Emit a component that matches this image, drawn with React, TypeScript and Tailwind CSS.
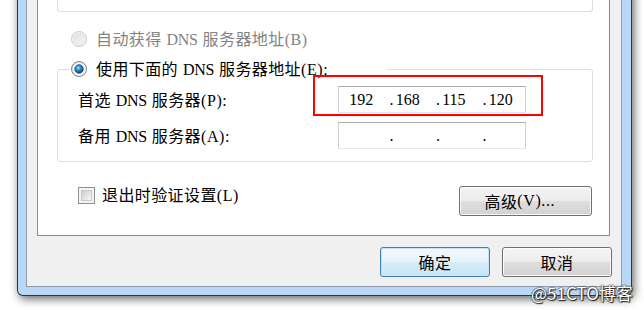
import React from "react";

function T({ s }: { s: string }) {
  const runs = s.match(/[\x00-\x7f]+|[^\x00-\x7f]+/g) || [];
  return (
    <>
      {runs.map((r, i) =>
        r.charCodeAt(0) < 128 ? (
          r.startsWith(" ") ? (
            <span
              key={i}
              className="inline-block whitespace-pre text-center font-['Liberation_Serif'] text-[16px] tracking-[-0.3px]"
              style={{ width: `${r.length * 8.2}px` }}
            >
              {r}
            </span>
          ) : (
            <span
              key={i}
              className="inline-block whitespace-pre text-left font-['Liberation_Serif'] text-[16px] tracking-[0.6px]"
              style={{ width: `${r.length * 8.2}px` }}
            >
              {r}
            </span>
          )
        ) : (
          <span key={i} className="tracking-[0.4px]">
            {r}
          </span>
        )
      )}
    </>
  );
}

function RadioOff() {
  return (
    <svg width="16" height="16" viewBox="0 0 16 16" className="shrink-0">
      <defs>
        <linearGradient id="rdoff" x1="0" y1="0" x2="1" y2="1">
          <stop offset="0" stopColor="#dedede" />
          <stop offset="1" stopColor="#f7f7f7" />
        </linearGradient>
      </defs>
      <circle cx="8" cy="8" r="7.5" fill="#f4f4f4" stroke="#c9c9c9" />
      <circle cx="8" cy="8" r="5.6" fill="url(#rdoff)" stroke="#e2e2e2" strokeWidth="0.6" />
    </svg>
  );
}

function RadioOn() {
  return (
    <svg width="16" height="16" viewBox="0 0 16 16" className="shrink-0">
      <defs>
        <radialGradient id="rdon" cx="0.42" cy="0.38" r="0.65">
          <stop offset="0" stopColor="#a6e4ff" />
          <stop offset="0.4" stopColor="#2f8fd0" />
          <stop offset="1" stopColor="#0b355f" />
        </radialGradient>
        <linearGradient id="rdring" x1="0" y1="0" x2="1" y2="1">
          <stop offset="0" stopColor="#d8d8d8" />
          <stop offset="1" stopColor="#ffffff" />
        </linearGradient>
      </defs>
      <circle cx="8" cy="8" r="7.5" fill="url(#rdring)" stroke="#7e8385" />
      <circle cx="8" cy="8" r="6" fill="#fbfbfb" />
      <circle cx="8" cy="8" r="4.4" fill="url(#rdon)" stroke="#1b4a78" strokeWidth="0.5" />
    </svg>
  );
}

function IpBox({ vals }: { vals: string[] }) {
  return (
    <div className="flex h-[27px] w-[188px] items-center border border-[#ccd0d6] border-t-[#abadb3] border-b-[#e3e9ef] bg-white pl-[2px]">
      {vals.map((v, i) => (
        <div key={i} className="flex w-[46.5px] shrink-0 items-center">
          <span className="inline-block w-[8.2px] text-center font-['Liberation_Serif'] text-[16px]">
            {i === 0 ? "\u00a0" : "."}
          </span>
          <span className="font-['Liberation_Serif'] text-[16px] whitespace-pre">{v}</span>
        </div>
      ))}
    </div>
  );
}

const btnNormal =
  "flex h-[30px] items-center justify-center rounded-[3px] border border-[#707070] bg-[linear-gradient(to_bottom,#f4f4f4_0%,#ececec_48%,#dedede_52%,#d2d2d2_100%)] shadow-[inset_0_0_0_1px_rgba(255,255,255,0.85)]";

export default function App() {
  return (
    <div className="relative h-[310px] w-[644px] overflow-hidden bg-white font-['Noto_Sans_CJK_SC',sans-serif] text-[16px] font-normal leading-[20px] text-black">
      {/* window */}
      <div className="ml-[17px] -mt-[40px] flex h-[336px] w-[615px] flex-col rounded-b-[6px] border border-t-0 border-[#2e3640] bg-[#b9d7f7] pb-[8px] pl-[8px] pr-[9px] shadow-[2px_3px_10px_rgba(0,0,0,0.6)]">
        {/* client */}
        <div className="flex flex-1 flex-col border border-t-0 border-[#8e9aa7] bg-[#f0f0f0] pl-[10px] pr-[11px]">
          {/* tab panel */}
          <div className="flex h-[276px] flex-col border border-[#898c95] bg-white">
            <div className="ml-[19px] mr-[16px] h-[51px] rounded-b-[3px] border border-t-0 border-[#d5dfe5]" />

            <div className="ml-[33px] mt-[17px] flex h-[20px] items-center">
              <RadioOff />
              <span className="ml-[9px] text-[#838383]">
                <T s="自动获得 DNS 服务器地址(B)" />
              </span>
            </div>

            <fieldset className="ml-[19px] mr-[16px] mt-[10px] rounded-[3px] border border-[#d5dfe5] pb-[12px] pl-[12px] pt-[7px]">
              <legend className="flex h-[20px] w-[317px] items-center bg-white pl-[1px]">
                <RadioOn />
                <span className="ml-[9px]">
                  <T s="使用下面的 DNS 服务器地址(E):" />
                </span>
              </legend>
              <div className="relative ml-[8px] flex flex-col gap-[9px]">
                <div className="flex items-center">
                  <span className="w-[260px] shrink-0">
                    <T s="首选 DNS 服务器(P):" />
                  </span>
                  <IpBox vals={["192", "168", "115", "120"]} />
                </div>
                <div className="flex items-center">
                  <span className="w-[260px] shrink-0">
                    <T s="备用 DNS 服务器(A):" />
                  </span>
                  <IpBox vals={["", "", "", ""]} />
                </div>
                <div className="absolute left-[235px] top-[-11px] h-[41px] w-[230px] border-[2px] border-[#ff0000]" />
              </div>
            </fieldset>

            <div className="ml-[40px] mr-[17px] mt-[23px] flex items-start justify-between">
              <div className="flex h-[20px] items-center">
                <div className="h-[17px] w-[17px] border border-[#8e8f8f] bg-[#f4f4f4] p-[2px]">
                  <div className="h-full w-full border border-[#c9c9c9] bg-[linear-gradient(135deg,#cfcfcf,#f7f7f7)]" />
                </div>
                <span className="ml-[7px]">
                  <T s="退出时验证设置(L)" />
                </span>
              </div>
              <div className={`mt-[1px] w-[133px] ${btnNormal}`}>
                <T s="高级(V)..." />
              </div>
            </div>
          </div>

          {/* bottom buttons */}
          <div className="-mr-[2px] flex h-[50px] justify-end gap-[12px] pt-[11px]">
            <div className="flex h-[30px] w-[110px] items-center justify-center rounded-[3px] border border-[#3c7fb1] bg-[linear-gradient(to_bottom,#f2f9fd_0%,#e6f3fb_48%,#d5ecf8_52%,#c8e5f5_100%)] shadow-[inset_0_0_0_1px_#c4e6f8]">
              <T s="确定" />
            </div>
            <div className={`w-[110px] ${btnNormal}`}>
              <T s="取消" />
            </div>
          </div>
        </div>
      </div>

      <div className="absolute left-[531px] top-[283px] font-['Noto_Sans_CJK_SC',sans-serif] text-[17px] font-normal leading-[20px] text-white [text-shadow:0_0_1px_#222,0_0_2px_#222,1px_1px_1px_#222]">
        @51CTO博客
      </div>
    </div>
  );
}
